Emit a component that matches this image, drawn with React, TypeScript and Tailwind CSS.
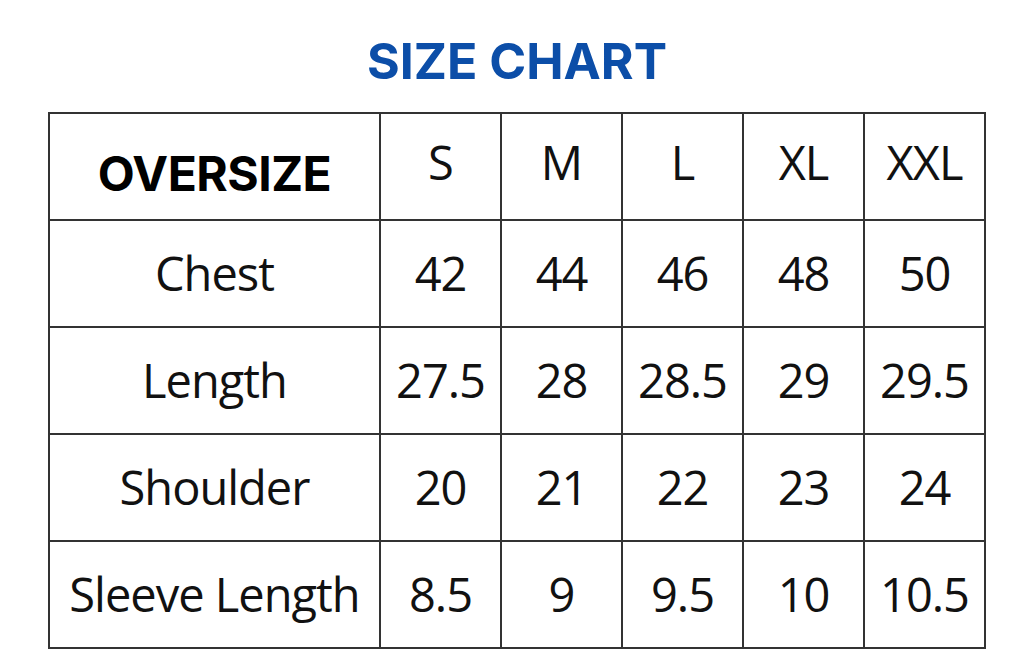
import * as React from "react";

const sizes = ["S", "M", "L", "XL", "XXL"];

const rows: { label: string; values: string[] }[] = [
  { label: "Chest", values: ["42", "44", "46", "48", "50"] },
  { label: "Length", values: ["27.5", "28", "28.5", "29", "29.5"] },
  { label: "Shoulder", values: ["20", "21", "22", "23", "24"] },
  { label: "Sleeve Length", values: ["8.5", "9", "9.5", "10", "10.5"] },
];

const cell = "border-2 border-[#333] text-center align-middle p-0";
const body = "text-[47px] font-[500] text-[#111] tracking-[-1px]";

export default function App() {
  return (
    <div className="w-[1024px] h-[670px] bg-white overflow-hidden font-['Open_Sans',sans-serif]">
      <h1 className="pt-[33px] pl-[10px] text-center text-[50px] leading-[56px] font-bold text-[#0c4ea8] font-['Inter',sans-serif]">
        SIZE CHART
      </h1>
      <table className="ml-[48px] mt-[23px] border-collapse table-fixed w-[936px]">
        <colgroup>
          <col className="w-[331px]" />
          <col className="w-[121px]" />
          <col className="w-[121px]" />
          <col className="w-[121px]" />
          <col className="w-[121px]" />
          <col className="w-[121px]" />
        </colgroup>
        <tbody>
          <tr className="h-[107px]">
            <td className={`${cell} pt-[14px] font-['Inter',sans-serif] font-bold text-[48px] text-black tracking-[-0.5px]`}>
              OVERSIZE
            </td>
            {sizes.map((s) => (
              <td key={s} className={`${cell} pb-[8px] ${body}`}>
                {s}
              </td>
            ))}
          </tr>
          {rows.map((r) => (
            <tr key={r.label} className="h-[107px]">
              <td className={`${cell} ${body}`}>{r.label}</td>
              {r.values.map((v, i) => (
                <td key={i} className={`${cell} ${body}`}>
                  {v}
                </td>
              ))}
            </tr>
          ))}
        </tbody>
      </table>
    </div>
  );
}
